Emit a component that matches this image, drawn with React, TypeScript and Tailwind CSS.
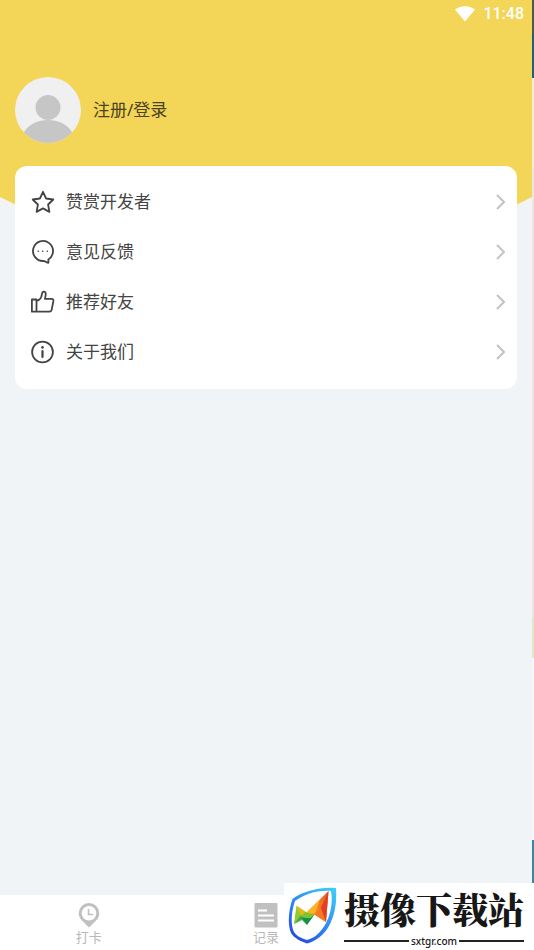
import type { ReactNode } from 'react'

const iconProps = {
  viewBox: '0 0 24 24',
  fill: 'none',
  stroke: 'currentColor',
  strokeWidth: 1.8,
  strokeLinejoin: 'round' as const,
  strokeLinecap: 'round' as const,
  className: 'w-6 h-6 shrink-0',
}

const StarIcon = () => (
  <svg {...iconProps}>
    <path d="M12 1.800l3.100 6.700 7.200 1-5.200 5 1.300 7.400-6.400-3.500-6.400 3.500 1.300-7.400-5.200-5 7.200-1z" />
  </svg>
)

const FeedbackIcon = () => (
  <svg {...iconProps}>
    <path d="M17.300 19.500A10 10 0 1 0 12.500 21c1.500 0 2.500.7 4.100 1.700.8.3 1.100 0 .7-3.200z" />
    <path d="M7.200 11.200h.1M11.700 11.200h.1M16.200 11.200h.1" strokeWidth="1.500" />
  </svg>
)

const ThumbIcon = () => (
  <svg {...iconProps}>
    <path d="M.9 9.500h4.600v12.200H.9zM5.500 10.800c2.700-.5 4.900-2.400 5.300-6.200.2-2 .9-3 2-3 1.500 0 2.100 1.300 1.900 3.200-.2 1.600-.5 2.700-.8 4h6.600c1.500 0 2.100.8 1.900 2.100l-1.700 8.800c-.3 1.400-.9 2-2.200 2h-13" />
  </svg>
)

const InfoIcon = () => (
  <svg {...iconProps}>
    <circle cx="11.500" cy="12" r="10.400" />
    <path d="M11.500 11v6" strokeWidth="2.200" />
    <circle cx="11.500" cy="7.400" r="1.300" fill="currentColor" stroke="none" />
  </svg>
)

const menu: { label: string; icon: ReactNode }[] = [
  { label: '赞赏开发者', icon: <StarIcon /> },
  { label: '意见反馈', icon: <FeedbackIcon /> },
  { label: '推荐好友', icon: <ThumbIcon /> },
  { label: '关于我们', icon: <InfoIcon /> },
]

function StatusBar() {
  return (
    <div className="flex items-center justify-end gap-2 h-7 pr-2 text-white">
      <svg viewBox="0 0 20 16" className="w-5 h-4" fill="currentColor">
        <path d="M0 3.500C6-1 14-1 20 3.500L10 15.500z" />
      </svg>
      <span className="font-['Roboto',sans-serif] text-base leading-5 font-medium">11:48</span>
    </div>
  )
}

function Avatar() {
  return (
    <svg viewBox="0 0 66 66" className="w-[66px] h-[66px] rounded-full shrink-0">
      <rect width="66" height="66" fill="#f0f0f0" />
      <circle cx="33" cy="30.500" r="12.500" fill="#c6c6c6" />
      <path d="M6 60C12 48 21 43 33 43s21 5 27 17v6H6z" fill="#c6c6c6" />
    </svg>
  )
}

function MenuCard() {
  return (
    <ul className="rounded-xl bg-white pt-[11px] pb-3 mt-[23px]">
      {menu.map((item) => (
        <li key={item.label}>
          <button type="button" className="flex items-center w-full h-[50px] pl-4 pr-3 gap-[11px] text-[#444]">
            {item.icon}
            <span className="text-[17px] leading-6">{item.label}</span>
            <svg viewBox="0 0 9 16" className="w-[9px] h-4 ml-auto" fill="none" stroke="#c3c3c3" strokeWidth="2">
              <path d="M1 1l7 7-7 7" />
            </svg>
          </button>
        </li>
      ))}
    </ul>
  )
}

function TabBar() {
  return (
    <nav className="grid grid-cols-3 h-[55px] bg-white text-[13px] leading-4 text-[#b8b8b8]">
      <a href="#checkin" className="flex flex-col items-center pt-2 gap-px">
        <svg viewBox="0 0 22 25" className="w-[22px] h-[25px]">
          <path
            d="M11 0a10.300 10.300 0 0 1 10.300 10.300c0 4-2.300 6.700-5.300 9.300L11 24.500 6 19.600C3 17 .7 14.300.7 10.300A10.300 10.300 0 0 1 11 0z"
            fill="#c0c0c0"
          />
          <circle cx="11" cy="10.300" r="7.300" fill="#fff" />
          <path d="M10.500 6v5.500H15" fill="none" stroke="#c0c0c0" strokeWidth="1.600" />
        </svg>
        打卡
      </a>
      <a href="#records" className="flex flex-col items-center pt-2 gap-px">
        <svg viewBox="0 0 24 25" className="w-6 h-[25px]">
          <rect x="0.500" y="0" width="23" height="24.500" rx="1" fill="#c0c0c0" />
          <path d="M4 7.500h9M4 12.500h16M4 17.500h16" stroke="#fff" strokeWidth="2" />
        </svg>
        记录
      </a>
    </nav>
  )
}

function ShieldLogo() {
  return (
    <svg viewBox="0 0 50 58" className="w-[50px] h-[58px] shrink-0">
      <defs>
        <linearGradient id="shield" x1="1" y1="0" x2="0.3" y2="1">
          <stop offset="0" stopColor="#3fd0f8" />
          <stop offset="0.6" stopColor="#2f86f3" />
          <stop offset="1" stopColor="#2450e0" />
        </linearGradient>
        <linearGradient id="flame" x1="0" y1="1" x2="1" y2="0">
          <stop offset="0" stopColor="#f9a51a" />
          <stop offset="1" stopColor="#ea5a25" />
        </linearGradient>
      </defs>
      <path
        fill="url(#shield)"
        fillRule="evenodd"
        d="M48 1C31 0 16 4 4.500 12C1 22-1 36 3 46C6 51 12 54 19 56.500C28 54 36 48 41 39C47 28 49 15 48 1zM43 4C29 3 17 7 7 14C3.500 24 2.500 36 5.500 44C8 49 13 51 19 53C27 51 33 45 37.500 37C43 27 45 15 43 4z"
      />
      <path fill="#e5b91c" d="M8.500 18.500L19 25.500L13 31z" />
      <path fill="#8fcb2c" d="M8.500 18.500L14 31L6 37z" />
      <path fill="#3eb049" d="M6 37L13 28L19 38L14 33z" />
      <path fill="#7cc52f" d="M13 30L17 25L27 27L22 31z" />
      <path fill="#179141" d="M13 30L22 31L27 27L19 38z" />
      <path fill="url(#flame)" d="M40.500 4L18.500 25.500L26 27.500L38 35z" />
      <path fill="#fbb321" d="M18.500 25.500L32 12.500L27 27z" />
      <path fill="#e33f25" d="M40.500 4L31 25L38 35z" />
      <path fill="#f47a21" d="M26 27L33 21L38 35z" />
    </svg>
  )
}

function SiteBadge() {
  return (
    <aside className="absolute right-0 bottom-0 flex items-start h-[67px] w-[250px] pt-1 pl-1 pr-[11px] gap-1.5 bg-white text-[#171717]">
      <ShieldLogo />
      <div className="flex-1">
        <div className="font-['Noto_Serif_CJK_SC','Noto_Sans_CJK_SC',serif] text-[36px] leading-[44px] font-black whitespace-nowrap">
          摄像下载站
        </div>
        <div className="flex items-center gap-0.5 h-3 mt-1">
          <span className="flex-1 h-0.5 bg-[#222]" />
          <span className="font-['Noto_Sans',sans-serif] text-[10px] leading-3 font-medium">sxtgr.com</span>
          <span className="flex-1 h-0.5 bg-[#222]" />
        </div>
      </div>
    </aside>
  )
}

// Sliver of the neighbouring window along the right edge
function EdgeStrip() {
  return (
    <div className="flex flex-col w-0.5 shrink-0 bg-[#f1f1f0]">
      <span className="h-[34px] bg-[#4c5a48]" />
      <span className="h-11 bg-[#245f70]" />
      <span className="h-[90px] bg-[#f3ecd0]" />
      <span className="h-[450px] bg-[#eee4e4]" />
      <span className="h-10 bg-[#e2e8c6]" />
      <span className="flex-1 bg-[#f5f8fa]" />
      <span className="h-[110px] bg-[#3f83a0]" />
    </div>
  )
}

export default function App() {
  return (
    <div className="relative flex min-h-screen font-['Noto_Sans','Noto_Sans_CJK_SC',sans-serif]">
      <div className="flex flex-col flex-1 min-w-0 bg-[#f0f4f7]">
        <main className="relative isolate flex-1">
          {/* Curved yellow backdrop behind the profile and the card */}
          <svg
            viewBox="0 0 532 270"
            preserveAspectRatio="none"
            className="absolute inset-x-0 top-0 -z-10 w-full h-[270px]"
          >
            <path d="M0 0h532v197Q266 333 0 197z" fill="#f3d558" />
          </svg>
          <StatusBar />
          <div className="px-[15px] pt-[49px]">
            <button type="button" className="flex items-center gap-3 text-[#4b431f]">
              <Avatar />
              <span className="text-[17px] leading-6">注册/登录</span>
            </button>
            <MenuCard />
          </div>
        </main>
        <TabBar />
      </div>
      <EdgeStrip />
      <SiteBadge />
    </div>
  )
}
